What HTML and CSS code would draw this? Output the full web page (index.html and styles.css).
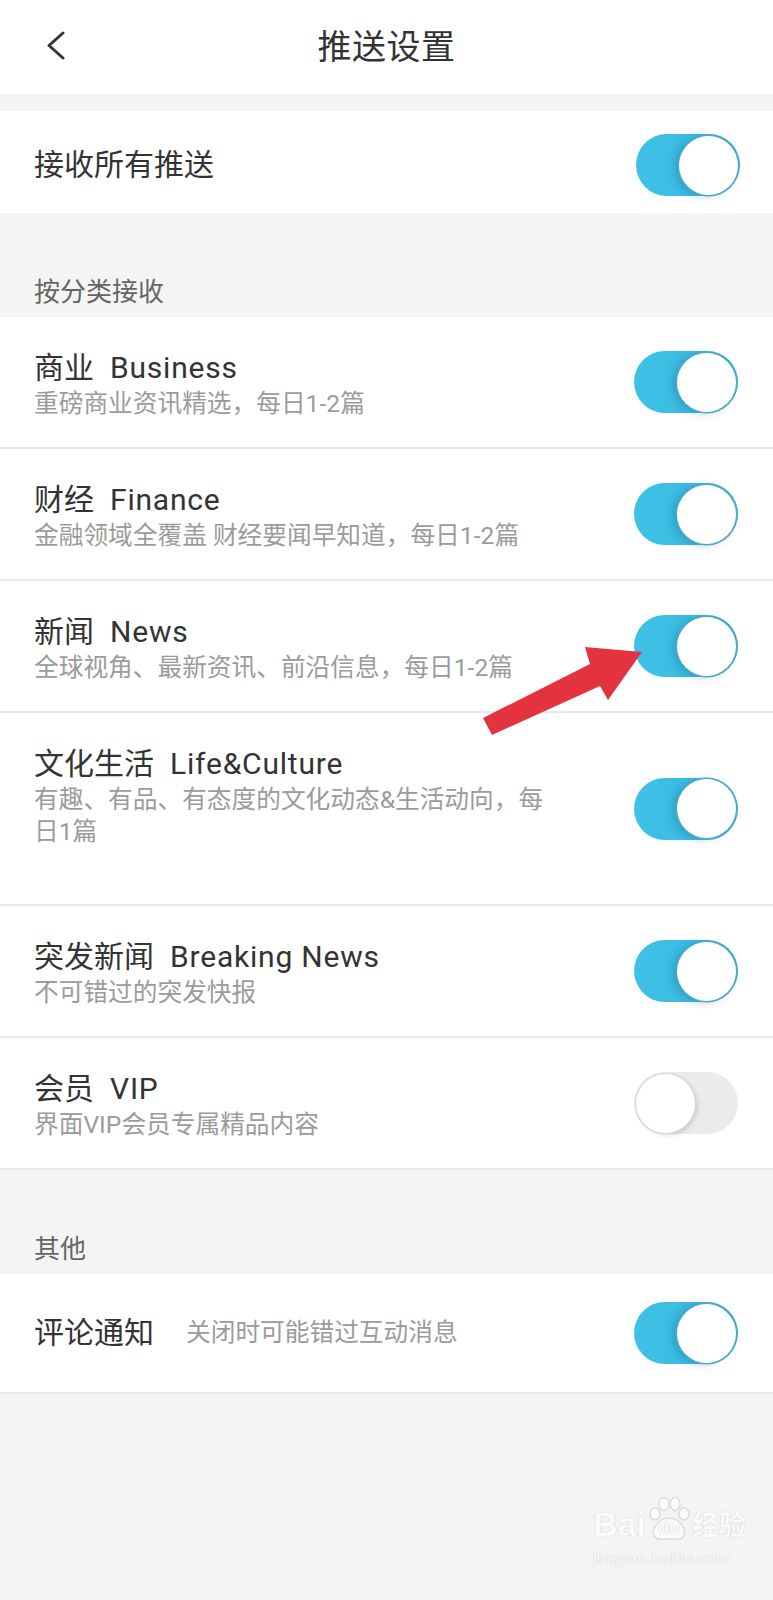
FILE: index.html
```html
<!DOCTYPE html>
<html lang="zh-CN">
<head>
<meta charset="utf-8">
<title>推送设置</title>
<link rel="stylesheet" href="styles.css">
</head>
<body>
<div class="page">
  <header class="topbar">
    <span class="back" aria-label="返回">
      <svg viewBox="0 0 20 30" width="20" height="30"><polyline points="17,2 3,14.5 17,27" fill="none" stroke="#333" stroke-width="3" stroke-linecap="round" stroke-linejoin="round"/></svg>
    </span>
    <h1 class="title">推送设置</h1>
    <span></span>
  </header>

  <div class="spacer"></div>

  <section class="group">
    <div class="row-main">
      <span class="name">接收所有推送</span>
      <span class="switch on"><span class="knob"></span></span>
    </div>
  </section>

  <h2 class="section-head">按分类接收</h2>

  <section class="group">
    <div class="item">
      <div class="text">
        <div class="name">商业<span class="en">Business</span></div>
        <div class="desc">重磅商业资讯精选，每日1-2篇</div>
      </div>
      <span class="switch on"><span class="knob"></span></span>
    </div>
    <div class="item">
      <div class="text">
        <div class="name">财经<span class="en">Finance</span></div>
        <div class="desc">金融领域全覆盖 财经要闻早知道，每日1-2篇</div>
      </div>
      <span class="switch on"><span class="knob"></span></span>
    </div>
    <div class="item">
      <div class="text">
        <div class="name">新闻<span class="en">News</span></div>
        <div class="desc">全球视角、最新资讯、前沿信息，每日1-2篇</div>
      </div>
      <span class="switch on"><span class="knob"></span></span>
    </div>
    <div class="item item-tall">
      <div class="text">
        <div class="name">文化生活<span class="en">Life&amp;Culture</span></div>
        <div class="desc">有趣、有品、有态度的文化动态&amp;生活动向，每日1篇</div>
      </div>
      <span class="switch on"><span class="knob"></span></span>
    </div>
    <div class="item">
      <div class="text">
        <div class="name">突发新闻<span class="en">Breaking News</span></div>
        <div class="desc">不可错过的突发快报</div>
      </div>
      <span class="switch on"><span class="knob"></span></span>
    </div>
    <div class="item">
      <div class="text">
        <div class="name">会员<span class="en">VIP</span></div>
        <div class="desc">界面VIP会员专属精品内容</div>
      </div>
      <span class="switch off"><span class="knob"></span></span>
    </div>
  </section>

  <h2 class="section-head">其他</h2>

  <section class="group">
    <div class="row-comment">
      <div class="inline">
        <span class="name">评论通知</span>
        <span class="hint">关闭时可能错过互动消息</span>
      </div>
      <span class="switch on"><span class="knob"></span></span>
    </div>
  </section>

  <svg class="annotation" viewBox="0 0 773 1600" width="773" height="1600" aria-hidden="true">
    <polygon points="483,718 590,664 585,647 642,652 608,700 600,686 492,735" fill="#e2333f"/>
  </svg>

  <div class="watermark" aria-hidden="true">
    <div class="wm-logo">
      <span class="wm-bai">Bai</span>
      <span class="wm-paw">
        <svg viewBox="0 0 50 46" width="50" height="46">
          <g fill="#fbfbfb" stroke="#dcdcdc" stroke-width="1.5">
            <ellipse cx="11" cy="18" rx="5" ry="6"/>
            <ellipse cx="20" cy="8" rx="5" ry="6.5"/>
            <ellipse cx="31" cy="8" rx="5" ry="6.5"/>
            <ellipse cx="40" cy="18" rx="5" ry="6"/>
            <path d="M25 22 C14 22 7 34 10 40 C13 45 20 43 25 43 C30 43 37 45 40 40 C43 34 36 22 25 22 Z"/>
          </g>
        </svg>
        <span class="wm-du">du</span>
      </span>
      <span class="wm-cn">经验</span>
    </div>
    <div class="wm-url">jingyan.baidu.com</div>
  </div>
</div>
</body>
</html>
```

FILE: styles.css
```css
* { box-sizing: border-box; }

html, body {
  margin: 0;
  padding: 0;
}

body {
  background: #f4f4f4;
  font-family: "Roboto", "Noto Sans CJK SC", sans-serif;
  color: #333;
}

.page {
  position: relative;
  width: 773px;
  min-height: 1600px;
}

/* top bar */
.topbar {
  height: 94px;
  background: #fff;
  display: grid;
  grid-template-columns: 1fr auto 1fr;
  align-items: center;
}

.back {
  display: flex;
  align-items: center;
  margin-left: 46px;
  margin-top: -2px;
}

.title {
  margin: 0;
  font-size: 34px;
  font-weight: 400;
  color: #333;
  line-height: 40px;
  letter-spacing: 0.5px;
}

.spacer {
  height: 17px;
}

.group {
  background: #fff;
}

.name {
  font-size: 30px;
  line-height: 36px;
  color: #333;
  white-space: nowrap;
}

.en {
  margin-left: 16px;
  letter-spacing: 0.8px;
}

.row-main {
  height: 102px;
  padding: 6px 33px 0 34px;
  display: flex;
  align-items: center;
  justify-content: space-between;
}

.section-head {
  margin: 0;
  height: 104px;
  padding: 0 34px 10px;
  display: flex;
  align-items: flex-end;
  font-size: 26px;
  line-height: 30px;
  font-weight: 400;
  color: #666;
}

.item {
  min-height: 132px;
  display: flex;
  align-items: center;
  justify-content: space-between;
  padding: 0 35px 0 34px;
  border-bottom: 2px solid #e9e9e9;
}

.item-tall {
  min-height: 193px;
}

.text {
  width: 520px;
  align-self: flex-start;
  padding-top: 33px;
}

.desc {
  margin-top: 2px;
  font-size: 24.7px;
  line-height: 32px;
  color: #9b9b9b;
}

.row-comment {
  height: 120px;
  padding: 0 35px 0 34px;
  display: flex;
  align-items: center;
  justify-content: space-between;
  border-bottom: 2px solid #e9e9e9;
}

.inline {
  display: flex;
  align-items: center;
  gap: 32px;
}

.hint {
  font-size: 24.7px;
  line-height: 32px;
  color: #9b9b9b;
}

/* switches */
.switch {
  flex: none;
  width: 104px;
  height: 62px;
  border-radius: 31px;
  display: flex;
  align-items: center;
  padding: 0 2px;
}

.switch.on {
  background: linear-gradient(90deg, #3fc0e6 0%, #3bbce3 55%, #36afd6 100%);
  justify-content: flex-end;
}

.switch.off {
  background: #ebebeb;
  justify-content: flex-start;
}

.knob {
  width: 59px;
  height: 59px;
  border-radius: 50%;
  background: #fff;
}

.switch.on .knob {
  box-shadow: 0 0 0 1.5px #4aa9c9, -4px 1px 8px rgba(0, 70, 100, 0.28);
}

.switch.off .knob {
  box-shadow: 0 0 0 1px #d6d6d6, 2px 2px 5px rgba(0, 0, 0, 0.16);
}

/* overlays */
.annotation {
  position: absolute;
  left: 0;
  top: 0;
  pointer-events: none;
}

.watermark {
  position: absolute;
  left: 593px;
  top: 1496px;
  white-space: nowrap;
  color: #fbfbfb;
  text-shadow: 0 0 1px #cfcfcf, 0 0 1px #cfcfcf;
  pointer-events: none;
}

.wm-logo {
  display: flex;
  align-items: flex-end;
  height: 46px;
}

.wm-bai {
  font-family: "Liberation Sans", sans-serif;
  font-weight: 700;
  font-size: 34px;
  line-height: 36px;
}

.wm-paw {
  position: relative;
  flex: none;
  width: 46px;
  height: 46px;
  display: flex;
  justify-content: center;
}

.wm-paw svg {
  position: absolute;
  left: -2px;
  top: 0;
}

.wm-du {
  position: relative;
  font-family: "Liberation Sans", sans-serif;
  font-weight: 700;
  font-size: 18px;
  line-height: 20px;
  margin-top: 22px;
}

.wm-cn {
  font-family: "Noto Sans CJK SC", sans-serif;
  font-weight: 700;
  font-size: 27px;
  line-height: 36px;
}

.wm-url {
  font-family: "Liberation Sans", sans-serif;
  font-size: 17px;
  line-height: 22px;
  margin-top: 6px;
}
```
